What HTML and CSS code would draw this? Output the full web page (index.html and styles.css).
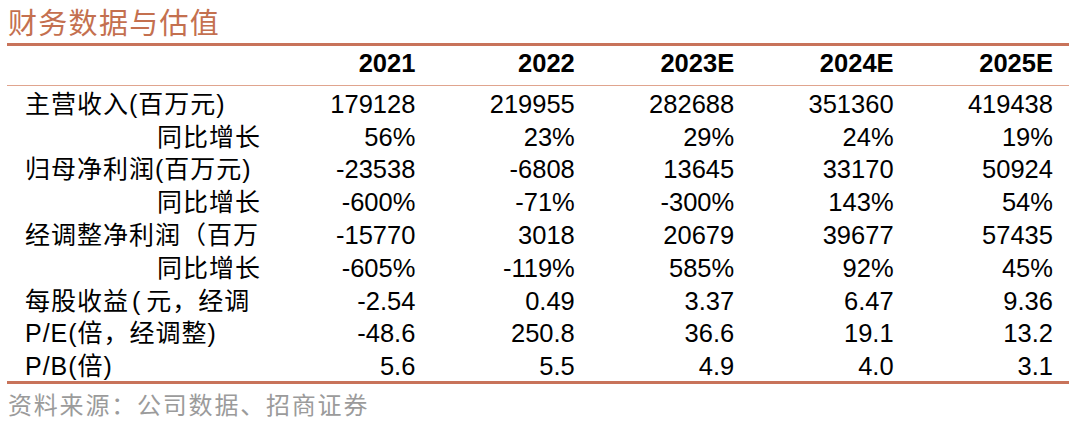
FILE: index.html
```html
<!DOCTYPE html>
<html lang="zh">
<head>
<meta charset="utf-8">
<title>财务数据与估值</title>
<link rel="stylesheet" href="styles.css">
</head>
<body>
<div class="page">
  <h1 class="title">财务数据与估值</h1>
  <div class="table">
    <div class="row head">
      <div class="lab"></div>
      <div class="num">2021</div>
      <div class="num">2022</div>
      <div class="num">2023E</div>
      <div class="num">2024E</div>
      <div class="num">2025E</div>
    </div>
    <div class="row">
      <div class="lab">主营收入(百万元)</div>
      <div class="num">179128</div>
      <div class="num">219955</div>
      <div class="num">282688</div>
      <div class="num">351360</div>
      <div class="num">419438</div>
    </div>
    <div class="row">
      <div class="lab sub">同比增长</div>
      <div class="num">56%</div>
      <div class="num">23%</div>
      <div class="num">29%</div>
      <div class="num">24%</div>
      <div class="num">19%</div>
    </div>
    <div class="row">
      <div class="lab">归母净利润(百万元)</div>
      <div class="num">-23538</div>
      <div class="num">-6808</div>
      <div class="num">13645</div>
      <div class="num">33170</div>
      <div class="num">50924</div>
    </div>
    <div class="row">
      <div class="lab sub">同比增长</div>
      <div class="num">-600%</div>
      <div class="num">-71%</div>
      <div class="num">-300%</div>
      <div class="num">143%</div>
      <div class="num">54%</div>
    </div>
    <div class="row">
      <div class="lab">经调整净利润（百万</div>
      <div class="num">-15770</div>
      <div class="num">3018</div>
      <div class="num">20679</div>
      <div class="num">39677</div>
      <div class="num">57435</div>
    </div>
    <div class="row">
      <div class="lab sub">同比增长</div>
      <div class="num">-605%</div>
      <div class="num">-119%</div>
      <div class="num">585%</div>
      <div class="num">92%</div>
      <div class="num">45%</div>
    </div>
    <div class="row">
      <div class="lab">每股收益<span class="hp">(</span>元，经调</div>
      <div class="num">-2.54</div>
      <div class="num">0.49</div>
      <div class="num">3.37</div>
      <div class="num">6.47</div>
      <div class="num">9.36</div>
    </div>
    <div class="row">
      <div class="lab">P/E(倍，经调整)</div>
      <div class="num">-48.6</div>
      <div class="num">250.8</div>
      <div class="num">36.6</div>
      <div class="num">19.1</div>
      <div class="num">13.2</div>
    </div>
    <div class="row">
      <div class="lab">P/B(倍)</div>
      <div class="num">5.6</div>
      <div class="num">5.5</div>
      <div class="num">4.9</div>
      <div class="num">4.0</div>
      <div class="num">3.1</div>
    </div>
  </div>
  <div class="source">资料来源：公司数据、招商证券</div>
</div>
</body>
</html>
```
FILE: styles.css
```css
html, body {
  margin: 0;
  padding: 0;
  background: #ffffff;
}

body {
  font-family: "Liberation Sans", "Noto Sans CJK SC", sans-serif;
  color: #000000;
}

.page {
  width: 1080px;
  height: 424px;
  overflow: hidden;
}

.title {
  margin: 0;
  height: 43px;
  padding-left: 8px;
  font-family: "Noto Sans CJK SC", sans-serif;
  font-weight: 400;
  font-size: 29px;
  line-height: 43px;
  letter-spacing: 1.3px;
  color: #c4704f;
}

.table {
  margin-left: 7px;
  width: 1062px;
  border-top: 3px solid #c8735a;
  border-bottom: 3px solid #c8735a;
}

.row {
  display: grid;
  grid-template-columns: 249px repeat(5, 1fr);
  align-items: center;
  height: 32.8px;
  padding-top: 3px;
  padding-right: 16px;
  box-sizing: border-box;
  white-space: nowrap;
}

.head {
  height: 40px;
  padding-top: 0;
  padding-bottom: 6px;
  border-bottom: 1px solid #e0a48e;
  font-weight: 700;
}

.num {
  text-align: right;
  font-size: 25.5px;
  line-height: 28px;
}

.lab {
  padding-left: 18px;
  font-family: "Liberation Sans", "Noto Sans CJK SC", sans-serif;
  font-size: 25px;
  line-height: 28px;
  letter-spacing: 1px;
  overflow: visible;
}

.lab.sub {
  padding-left: 150px;
}

.hp {
  display: inline-block;
  padding: 0 5px 0 3px;
}

.source {
  height: 37px;
  padding-left: 8px;
  font-family: "Noto Sans CJK SC", sans-serif;
  font-size: 24px;
  line-height: 40px;
  letter-spacing: 1.8px;
  color: #9b9b9b;
}
```
